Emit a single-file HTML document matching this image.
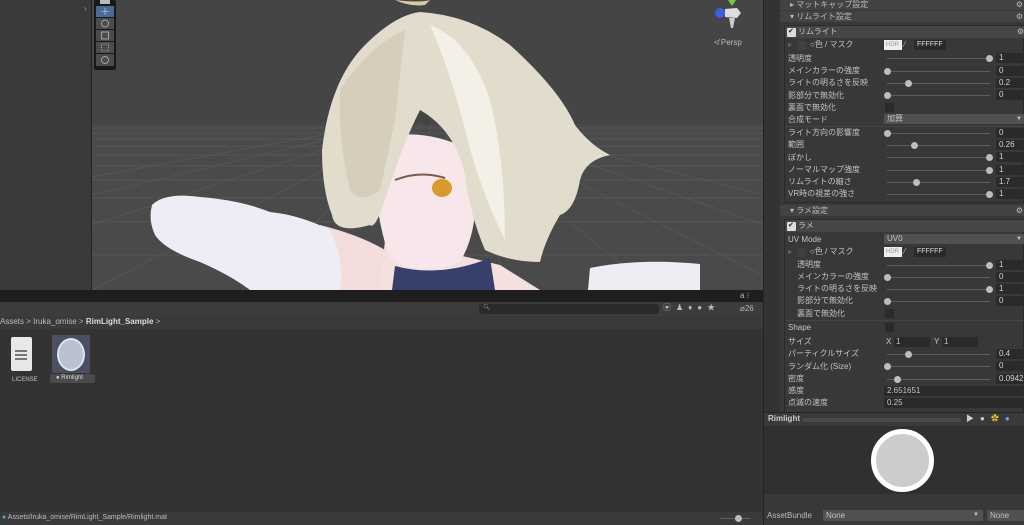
<!DOCTYPE html>
<html><head><meta charset="utf-8"><style>
*{margin:0;padding:0;box-sizing:border-box}
body{width:1024px;height:525px;overflow:hidden;background:#383838;font-family:"Liberation Sans","Noto Sans CJK JP",sans-serif;font-size:8px;color:#c4c4c4;position:relative}
.a{position:absolute}
.t{position:absolute;white-space:nowrap;line-height:10px}
.trk{position:absolute;height:1px;background:#5e5e5e}
.th{position:absolute;width:7px;height:7px;border-radius:50%;background:#bdbdbd}
.num{position:absolute;left:996px;width:30px;height:10px;background:#2a2a2a;border-radius:2px;padding-left:3px;line-height:10px;color:#d2d2d2}
.chk{position:absolute;width:9px;height:9px;background:#2a2a2a;border-radius:1px}
.hdr{position:absolute;left:780px;width:244px;height:11px;background:#434343;line-height:11px;padding-left:10px;color:#bbb}
.gear{position:absolute;right:1px;color:#bbb;font-size:8px}
</style></head><body>
<div class="a" style="left:0;top:0;width:91px;height:290px;background:#3a3a3a"></div>
<div class="t" style="left:84px;top:4px;color:#999">›</div>
<div class="a" style="left:91px;top:0;width:1px;height:290px;background:#222"></div>
<svg class="a" style="left:92px;top:0" width="671" height="290" viewBox="0 0 671 290">
<rect width="671" height="124" fill="#454545"/>
<rect y="124" width="671" height="166" fill="#4a4a4a"/>
<g stroke="#5a5a5a" stroke-width="0.7">
<line x1="0" y1="128" x2="671" y2="128"/><line x1="0" y1="133" x2="671" y2="133"/><line x1="0" y1="139" x2="671" y2="139"/><line x1="0" y1="146" x2="671" y2="146"/><line x1="0" y1="155" x2="671" y2="155"/><line x1="0" y1="166" x2="671" y2="166"/><line x1="0" y1="180" x2="671" y2="180"/><line x1="0" y1="198" x2="671" y2="198"/><line x1="0" y1="222" x2="671" y2="222"/><line x1="0" y1="255" x2="671" y2="255"/>
<line x1="300" y1="124" x2="-400" y2="290"/><line x1="310" y1="124" x2="-200" y2="290"/><line x1="320" y1="124" x2="0" y2="290"/><line x1="330" y1="124" x2="150" y2="290"/><line x1="340" y1="124" x2="290" y2="290"/><line x1="350" y1="124" x2="420" y2="290"/><line x1="360" y1="124" x2="560" y2="290"/><line x1="370" y1="124" x2="700" y2="290"/><line x1="380" y1="124" x2="860" y2="290"/><line x1="390" y1="124" x2="1050" y2="290"/><line x1="290" y1="124" x2="-620" y2="290"/>
</g>
<g transform="translate(-92,0)">
<!-- skin arm -->
<path d="M320 225 Q360 235 385 250 L400 290 L330 290Z" fill="#f2dcdc"/>
<!-- left sleeve -->
<path d="M152 205 Q165 192 200 197 Q240 200 270 212 Q300 215 330 230 Q345 260 340 290 L250 290 Q230 275 200 262 Q165 250 155 235 Q148 220 152 205Z" fill="#eeedf5"/>
<!-- neck/body -->
<path d="M385 240 Q440 250 500 265 L540 290 L380 290Z" fill="#f5e0e0"/>
<!-- face -->
<path d="M375 140 Q420 125 470 150 Q485 220 460 262 Q420 278 390 258 Q372 210 375 140Z" fill="#f7e6ea"/>
<!-- bow -->
<path d="M395 266 Q440 278 490 258 L495 290 L392 290Z" fill="#37406a"/>
<!-- right sleeve -->
<path d="M590 268 Q640 258 700 264 L700 290 L588 290Z" fill="#eeedf4"/>
<!-- hair -->
<path d="M322 150 Q330 80 365 45 Q395 15 420 12 Q470 15 510 45 Q560 90 575 125 Q590 145 610 155 Q585 160 580 180 Q575 210 560 215 Q545 240 540 262 Q510 262 485 250 Q470 215 465 175 Q455 130 420 110 Q400 150 385 200 Q375 230 370 225 Q335 235 332 215 Q322 190 322 150Z" fill="#e2dccd"/>
<path d="M340 90 Q370 45 405 30 L395 120 L380 190 Q360 205 350 190 Q338 140 340 90Z" fill="#d6cdbb"/>
<path d="M430 25 Q470 40 490 100 Q505 160 505 240 Q480 190 465 130 Q450 70 430 25Z" fill="#f3f0e8"/>
<path d="M395 0 Q420 3 430 0 L425 5 Q410 7 395 0Z" fill="#d8c9a0"/>
<path d="M395 180 Q420 170 445 178" stroke="#7b5a4a" stroke-width="2" fill="none"/>
<ellipse cx="442" cy="188" rx="10" ry="9" fill="#d89a2a"/>
</g>
<rect x="2" y="0" width="22" height="70" fill="#191919" rx="2"/>
<rect x="4" y="6" width="18" height="11" fill="#4a6a9a"/>
<rect x="4" y="18" width="18" height="11" fill="#4c4c4c"/><rect x="4" y="30" width="18" height="11" fill="#4c4c4c"/><rect x="4" y="42" width="18" height="11" fill="#4c4c4c"/><rect x="4" y="54" width="18" height="12" fill="#4c4c4c"/>
<g stroke="#bbb" stroke-width="0.8" fill="none"><path d="M13 8 V15 M9.5 11.5 H16.5"/><circle cx="13" cy="23.5" r="3.5"/><rect x="9.5" y="32" width="7" height="7"/><rect x="9.5" y="44" width="7" height="7" stroke-dasharray="1 1"/><circle cx="13" cy="60" r="3.5"/></g>
<rect x="8" y="0" width="10" height="4" fill="#bbb"/>
<circle cx="628" cy="13" r="5" fill="#3d5ee0"/>
<path d="M633 9 L645 8 L649 13 L645 18 L633 17Z" fill="#ddd"/>
<path d="M636 0 L644 0 L640 6Z" fill="#7c3"/>
<path d="M637 18 L643 18 L641 28 L639 28Z" fill="#ccc"/>
<text x="622" y="45" fill="#bbb" font-size="8" font-family="Liberation Sans">≮ Persp</text>
</svg>
<div class="a" style="left:763px;top:0;width:1px;height:525px;background:#222"></div>

<div class="a" style="left:0;top:290px;width:763px;height:12px;background:#1e1e1e"></div>
<div class="t" style="left:740px;top:291px;color:#bbb">a ⁝</div>
<div class="a" style="left:0;top:302px;width:763px;height:14px;background:#3c3c3c"></div>
<div class="a" style="left:479px;top:304px;width:180px;height:10px;background:#2a2a2a;border-radius:3px"></div>
<div class="t" style="left:483px;top:303px;font-size:6px;color:#999">🔍︎</div>
<div class="t" style="left:663px;top:303px;color:#bbb;letter-spacing:5px">▣♟♦●★</div>
<div class="t" style="left:740px;top:304px;color:#bbb">⌀26</div>
<div class="a" style="left:0;top:316px;width:763px;height:13px;background:#3a3a3a"></div>
<div class="t" style="left:0;top:317px;color:#bbb">Assets &gt; Iruka_omise &gt; <b style="color:#ddd">RimLight_Sample</b> &gt;</div>
<div class="a" style="left:0;top:329px;width:763px;height:183px;background:#333"></div>
<div class="a" style="left:11px;top:337px;width:21px;height:34px;background:#e8e8e8;border-radius:2px"></div>
<div class="a" style="left:15px;top:350px;width:12px;height:2px;background:#777;box-shadow:0 4px 0 #777,0 8px 0 #777"></div>
<div class="t" style="left:12px;top:375px;font-size:6px">LICENSE</div>
<div class="a" style="left:52px;top:335px;width:38px;height:38px;background:#4a5060"></div>
<div class="a" style="left:57px;top:338px;width:28px;height:33px;border-radius:50%;background:#b9c1d0;border:2px solid #dde3f0"></div>
<div class="a" style="left:50px;top:374px;width:45px;height:9px;background:#4a4a4a;border-radius:2px"></div>
<div class="t" style="left:56px;top:373px;font-size:6px;color:#ddd">● Rimlight</div>
<div class="a" style="left:0;top:512px;width:763px;height:13px;background:#3a3a3a"></div>
<div class="t" style="left:2px;top:513px;font-size:7px;color:#bbb"><span style="color:#5ad">●</span> Assets/Iruka_omise/RimLight_Sample/Rimlight.mat</div>
<div class="trk" style="left:720px;top:518px;width:30px"></div><div class="th" style="left:735px;top:515px"></div>

<div class="a" style="left:764px;top:0;width:16px;height:412px;background:#333"></div>
<div class="hdr" style="top:0;height:10px;line-height:10px">▸ マットキャップ設定<span class="gear">⚙</span></div>
<div class="hdr" style="top:11px">▾ リムライト設定<span class="gear">⚙</span></div>
<div class="a" style="left:784px;top:25px;width:240px;height:178px;border:1px solid #2a2a2a"></div>
<div class="a" style="left:785px;top:26px;width:239px;height:12px;background:#464646"></div>
<div class="chk" style="left:787px;top:28px;background:#ddd"></div><div class="t" style="left:788px;top:27px;color:#222;font-size:7px">✔</div>
<div class="t" style="left:798px;top:27px">リムライト</div><div class="t" style="left:1017px;top:27px">⚙</div>

<div class="t" style="left:788px;top:40px;color:#666">▸</div><div class="chk" style="left:797px;top:41px;background:#404040"></div><div class="t" style="left:810px;top:40px">○色 / マスク</div>
<div class="a" style="left:884px;top:40px;width:18px;height:10px;background:#eee;color:#999;font-size:6px;line-height:10px;padding-left:2px">HDR</div>
<div class="t" style="left:904px;top:40px">⁄</div>
<div class="a" style="left:914px;top:40px;width:32px;height:10px;background:#2a2a2a;line-height:10px;padding-left:3px;color:#ddd;font-size:7px">FFFFFF</div>

<div class="t" style="left:788px;top:54px">透明度</div><div class="trk" style="left:887px;top:58px;width:103px"></div><div class="th" style="left:986px;top:55px"></div><div class="num" style="top:53px">1</div>
<div class="t" style="left:788px;top:66px">メインカラーの強度</div><div class="trk" style="left:887px;top:71px;width:103px"></div><div class="th" style="left:884px;top:68px"></div><div class="num" style="top:66px">0</div>
<div class="t" style="left:788px;top:78px">ライトの明るさを反映</div><div class="trk" style="left:887px;top:83px;width:103px"></div><div class="th" style="left:905px;top:80px"></div><div class="num" style="top:78px">0.2</div>
<div class="t" style="left:788px;top:91px">影部分で無効化</div><div class="trk" style="left:887px;top:95px;width:103px"></div><div class="th" style="left:884px;top:92px"></div><div class="num" style="top:90px">0</div>
<div class="t" style="left:788px;top:103px">裏面で無効化</div><div class="chk" style="left:885px;top:103px"></div>
<div class="t" style="left:788px;top:115px">合成モード</div><div class="a" style="left:884px;top:114px;width:140px;height:10px;background:#515151;line-height:10px;padding-left:3px">加算<span style="position:absolute;right:2px;font-size:6px">▼</span></div>
<div class="a" style="left:786px;top:126px;width:238px;height:1px;background:#444"></div>
<div class="t" style="left:788px;top:128px">ライト方向の影響度</div><div class="trk" style="left:887px;top:133px;width:103px"></div><div class="th" style="left:884px;top:130px"></div><div class="num" style="top:128px">0</div>
<div class="t" style="left:788px;top:140px">範囲</div><div class="trk" style="left:887px;top:145px;width:103px"></div><div class="th" style="left:911px;top:142px"></div><div class="num" style="top:140px">0.26</div>
<div class="t" style="left:788px;top:153px">ぼかし</div><div class="trk" style="left:887px;top:157px;width:103px"></div><div class="th" style="left:986px;top:154px"></div><div class="num" style="top:152px">1</div>
<div class="t" style="left:788px;top:165px">ノーマルマップ強度</div><div class="trk" style="left:887px;top:170px;width:103px"></div><div class="th" style="left:986px;top:167px"></div><div class="num" style="top:165px">1</div>
<div class="t" style="left:788px;top:177px">リムライトの細さ</div><div class="trk" style="left:887px;top:182px;width:103px"></div><div class="th" style="left:913px;top:179px"></div><div class="num" style="top:177px">1.7</div>
<div class="t" style="left:788px;top:189px">VR時の視差の強さ</div><div class="trk" style="left:887px;top:194px;width:103px"></div><div class="th" style="left:986px;top:191px"></div><div class="num" style="top:189px">1</div>

<div class="hdr" style="top:205px">▾ ラメ設定<span class="gear">⚙</span></div>
<div class="a" style="left:784px;top:219px;width:240px;height:194px;border:1px solid #2a2a2a"></div>
<div class="a" style="left:785px;top:220px;width:239px;height:12px;background:#464646"></div>
<div class="chk" style="left:787px;top:222px;background:#ddd"></div><div class="t" style="left:788px;top:221px;color:#222;font-size:7px">✔</div>
<div class="t" style="left:798px;top:221px">ラメ</div>
<div class="t" style="left:788px;top:235px">UV Mode</div><div class="a" style="left:884px;top:234px;width:140px;height:10px;background:#515151;line-height:10px;padding-left:3px">UV0<span style="position:absolute;right:2px;font-size:6px">▼</span></div>
<div class="t" style="left:788px;top:247px;color:#666">▸</div><div class="chk" style="left:797px;top:248px;background:#404040"></div><div class="t" style="left:810px;top:247px">○色 / マスク</div>
<div class="a" style="left:884px;top:247px;width:18px;height:10px;background:#eee;color:#999;font-size:6px;line-height:10px;padding-left:2px">HDR</div>
<div class="t" style="left:904px;top:247px">⁄</div>
<div class="a" style="left:914px;top:247px;width:32px;height:10px;background:#2a2a2a;line-height:10px;padding-left:3px;color:#ddd;font-size:7px">FFFFFF</div>
<div class="t" style="left:797px;top:260px">透明度</div><div class="trk" style="left:887px;top:265px;width:103px"></div><div class="th" style="left:986px;top:262px"></div><div class="num" style="top:260px">1</div>
<div class="t" style="left:797px;top:272px">メインカラーの強度</div><div class="trk" style="left:887px;top:277px;width:103px"></div><div class="th" style="left:884px;top:274px"></div><div class="num" style="top:272px">0</div>
<div class="t" style="left:797px;top:284px">ライトの明るさを反映</div><div class="trk" style="left:887px;top:289px;width:103px"></div><div class="th" style="left:986px;top:286px"></div><div class="num" style="top:284px">1</div>
<div class="t" style="left:797px;top:296px">影部分で無効化</div><div class="trk" style="left:887px;top:301px;width:103px"></div><div class="th" style="left:884px;top:298px"></div><div class="num" style="top:296px">0</div>
<div class="t" style="left:797px;top:309px">裏面で無効化</div><div class="chk" style="left:885px;top:309px"></div>
<div class="a" style="left:786px;top:320px;width:238px;height:1px;background:#444"></div>
<div class="t" style="left:788px;top:323px">Shape</div><div class="chk" style="left:885px;top:323px"></div>
<div class="t" style="left:788px;top:337px">サイズ</div>
<div class="t" style="left:886px;top:337px">X</div><div class="a" style="left:894px;top:337px;width:36px;height:10px;background:#2a2a2a;line-height:10px;padding-left:2px">1</div>
<div class="t" style="left:934px;top:337px">Y</div><div class="a" style="left:942px;top:337px;width:36px;height:10px;background:#2a2a2a;line-height:10px;padding-left:2px">1</div>
<div class="t" style="left:788px;top:349px">パーティクルサイズ</div><div class="trk" style="left:887px;top:354px;width:103px"></div><div class="th" style="left:905px;top:351px"></div><div class="num" style="top:349px">0.4</div>
<div class="t" style="left:788px;top:362px">ランダム化 (Size)</div><div class="trk" style="left:887px;top:366px;width:103px"></div><div class="th" style="left:884px;top:363px"></div><div class="num" style="top:361px">0</div>
<div class="t" style="left:788px;top:374px">密度</div><div class="trk" style="left:887px;top:379px;width:103px"></div><div class="th" style="left:894px;top:376px"></div><div class="num" style="top:374px">0.0942</div>
<div class="t" style="left:788px;top:386px">感度</div><div class="a" style="left:884px;top:386px;width:140px;height:10px;background:#2a2a2a;line-height:10px;padding-left:3px">2.651651</div>
<div class="t" style="left:788px;top:398px">点滅の速度</div><div class="a" style="left:884px;top:398px;width:140px;height:10px;background:#2a2a2a;line-height:10px;padding-left:3px">0.25</div>

<div class="a" style="left:764px;top:412px;width:260px;height:14px;background:#3a3a3a;border-top:1px solid #222"></div>
<div class="t" style="left:768px;top:414px;font-weight:bold;color:#ccc">Rimlight</div>
<div class="a" style="left:803px;top:418px;width:158px;height:4px;background:#4a4a4a"></div>
<div class="t" style="left:966px;top:414px;color:#ccc;letter-spacing:6px">▶●<span style="color:#eb3">✿</span><span style="color:#6ad">●</span></div>
<div class="a" style="left:764px;top:426px;width:260px;height:68px;background:#303030"></div>
<div class="a" style="left:871px;top:429px;width:63px;height:63px;border-radius:50%;background:#cccccc;border:5px solid #fff"></div>
<div class="a" style="left:764px;top:494px;width:260px;height:31px;background:#383838"></div>
<div class="t" style="left:767px;top:511px;color:#bbb">AssetBundle</div>
<div class="a" style="left:823px;top:510px;width:160px;height:11px;background:#515151;line-height:11px;padding-left:3px">None<span style="position:absolute;right:4px;font-size:6px">▼</span></div>
<div class="a" style="left:987px;top:510px;width:37px;height:11px;background:#515151;line-height:11px;padding-left:3px">None</div>
</body></html>
